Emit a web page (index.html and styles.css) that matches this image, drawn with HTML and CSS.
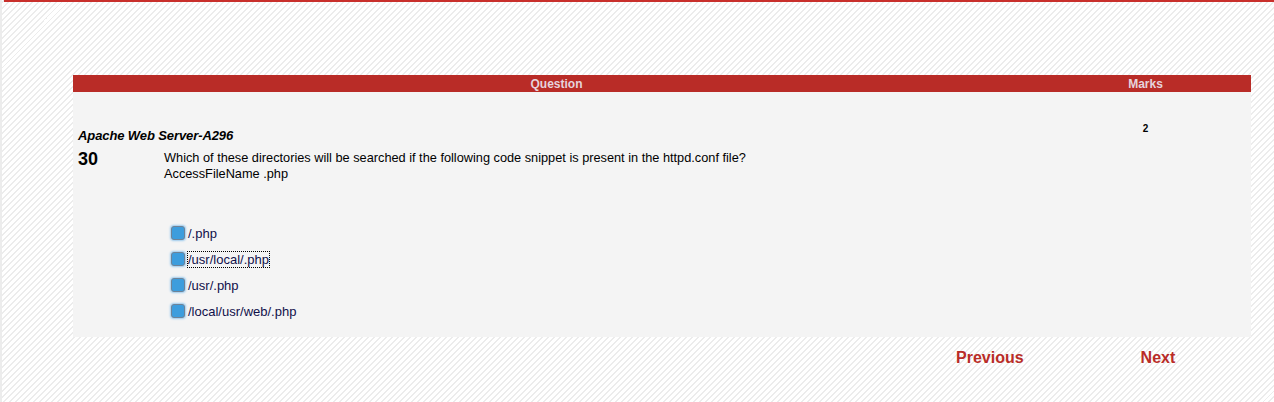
FILE: index.html
```html
<!DOCTYPE html>
<html>
<head>
<meta charset="utf-8">
<link rel="stylesheet" href="styles.css">
</head>
<body>
<div class="topline"></div>
<div class="page">
  <div class="exam">
    <div class="head">
      <div class="hq">Question</div>
      <div class="hm">Marks</div>
    </div>
    <div class="body">
      <div class="qcol">
        <div class="cat">Apache Web Server-A296</div>
        <div class="qrow">
          <div class="num">30</div>
          <div class="qtext">Which of these directories will be searched if the following code snippet is present in the httpd.conf file?<br>AccessFileName .php</div>
        </div>
        <div class="opts">
          <label class="opt"><span class="radio"></span><span>/.php</span></label>
          <label class="opt"><span class="radio"></span><span class="focus">/usr/local/.php</span></label>
          <label class="opt"><span class="radio"></span><span>/usr/.php</span></label>
          <label class="opt"><span class="radio"></span><span>/local/usr/web/.php</span></label>
        </div>
      </div>
      <div class="mcol">2</div>
    </div>
    <div class="nav">
      <a class="prev">Previous</a>
      <a class="next">Next</a>
    </div>
  </div>
</div>
</body>
</html>
```
FILE: styles.css
```css
html, body {
  margin: 0;
  padding: 0;
}
body {
  width: 1274px;
  height: 402px;
  overflow: hidden;
  font-family: "Liberation Sans", Arial, sans-serif;
  background: repeating-linear-gradient(-45deg, #ffffff 0px, #ffffff 2.83px, #ececec 2.83px, #ececec 4.24px);
  border-left: 2px solid #ececec;
  box-sizing: border-box;
}
.topline {
  height: 2px;
  margin-left: 2px;
  background: #c9302c;
}
.page {
  padding: 73px 23px 0 71px;
}
.exam {
  width: 1178px;
}
.head {
  display: flex;
  height: 17px;
  background: #b92c27;
  color: #e6d3dc;
  font-size: 12px;
  font-weight: bold;
  line-height: 18px;
}
.hq {
  width: 967px;
  text-align: center;
}
.hm {
  flex: 1;
  text-align: center;
}
.body {
  display: flex;
  background: #f4f4f4;
  height: 245px;
}
.qcol {
  width: 967px;
  padding: 35px 0 0 5px;
  box-sizing: border-box;
}
.cat {
  font-size: 13px;
  font-weight: bold;
  font-style: italic;
  line-height: 17px;
  color: #000;
  letter-spacing: -0.1px;
}
.qrow {
  display: flex;
  margin-top: 5px;
}
.num {
  width: 86px;
  font-size: 18px;
  font-weight: bold;
  line-height: 20px;
  color: #000;
}
.qtext {
  font-size: 12.75px;
  line-height: 16px;
  color: #000;
  padding-top: 1px;
}
.opts {
  display: flex;
  flex-direction: column;
  gap: 10px;
  margin: 43px 0 0 93px;
}
.opt {
  display: flex;
  align-items: center;
  height: 16px;
  font-size: 13px;
  color: #10104a;
}
.radio {
  width: 14px;
  height: 14px;
  margin-right: 3px;
  background: #3d9ddd;
  border: 1px solid #6f8397;
  border-radius: 3px;
  box-shadow: 0 0 2px 1px #9ccbee;
  box-sizing: border-box;
}
.focus {
  outline: 1px dotted #000;
}
.mcol {
  flex: 1;
  text-align: center;
  font-size: 10px;
  font-weight: bold;
  padding-top: 31px;
  color: #000;
}
.nav {
  display: flex;
  padding-top: 12px;
  font-size: 16px;
  font-weight: bold;
  color: #b92c27;
}
.prev {
  margin-left: 883px;
}
.next {
  margin-left: 117px;
}
```
